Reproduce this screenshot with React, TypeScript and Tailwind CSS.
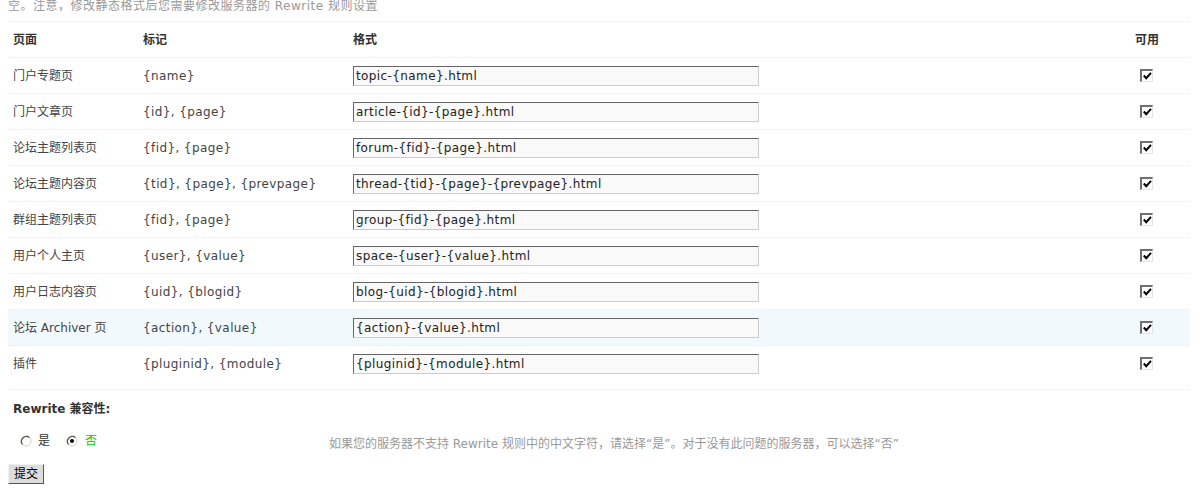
const rows = [
  { page: "门户专题页", mark: "{name}", format: "topic-{name}.html" },
  { page: "门户文章页", mark: "{id}, {page}", format: "article-{id}-{page}.html" },
  { page: "论坛主题列表页", mark: "{fid}, {page}", format: "forum-{fid}-{page}.html" },
  { page: "论坛主题内容页", mark: "{tid}, {page}, {prevpage}", format: "thread-{tid}-{page}-{prevpage}.html" },
  { page: "群组主题列表页", mark: "{fid}, {page}", format: "group-{fid}-{page}.html" },
  { page: "用户个人主页", mark: "{user}, {value}", format: "space-{user}-{value}.html" },
  { page: "用户日志内容页", mark: "{uid}, {blogid}", format: "blog-{uid}-{blogid}.html" },
  { page: "论坛 Archiver 页", mark: "{action}, {value}", format: "{action}-{value}.html", hover: true },
  { page: "插件", mark: "{pluginid}, {module}", format: "{pluginid}-{module}.html" },
];

function CheckBox() {
  return (
    <span className="ml-[5px] inline-flex h-[13px] w-[13px] items-center justify-center border-t-2 border-l-2 border-r border-b border-t-[#707070] border-l-[#707070] border-b-[#e4e4e4] border-r-[#e4e4e4] bg-white">
      <svg width="9" height="8" viewBox="0 0 9 8">
        <path d="M0.8 3.5 L3.2 6.2 L8 0.8" fill="none" stroke="#000" strokeWidth="2" />
      </svg>
    </span>
  );
}

function Radio({ checked }: { checked?: boolean }) {
  return (
    <svg width="12" height="12" viewBox="0 0 12 12">
      <circle cx="6" cy="6" r="5" fill="#fff" stroke="#d4d0c8" />
      <path d="M2.5 9.5 A5 5 0 0 1 9.5 2.5" fill="none" stroke="#555" strokeWidth="1.2" />
      {checked && <circle cx="6" cy="6" r="2" fill="#000" />}
    </svg>
  );
}

export default function App() {
  return (
    <div
      className="w-[1204px] bg-white px-2 text-[12px] text-[#444]"
      style={{ fontFamily: '"DejaVu Sans", "Noto Sans CJK SC", sans-serif' }}
    >
      <div className="h-[22px] w-[1182px] border-b border-dotted border-[#deeffb] leading-[12px] tracking-[0.5px] text-[#999]">
        空。注意，修改静态格式后您需要修改服务器的 Rewrite 规则设置
      </div>

      <div className="w-[1182px]">
        <div className="grid h-[36px] grid-cols-[130px_210px_782px_60px] items-center border-b border-dotted border-[#deeffb] font-bold text-[#333]">
          <div className="pl-[5px]">页面</div>
          <div className="pl-[5px]">标记</div>
          <div className="pl-[5px]">格式</div>
          <div className="pl-[5px]">可用</div>
        </div>

        {rows.map((r, i) => (
          <div
            key={r.page}
            className={`border-b border-dotted border-[#deeffb] ${r.hover ? "bg-[#f2f9fd]" : ""} ${i === rows.length - 1 ? "pb-[8px]" : ""}`}
          >
            <div className="grid h-[35px] grid-cols-[130px_210px_782px_60px] items-center">
              <div className="pl-[5px]">{r.page}</div>
              <div className="pl-[5px] tracking-[0.4px]">{r.mark}</div>
              <div className="pl-[5px]">
                <div className="flex h-[20px] w-[406px] items-center border border-t-[#666] border-l-[#666] border-b-[#ccc] border-r-[#ccc] bg-[#f9f9f9] pl-[2px] tracking-[0.4px] text-[#222]">
                  {r.format}
                </div>
              </div>
              <div className="flex pl-[5px]">
                <CheckBox />
              </div>
            </div>
          </div>
        ))}
      </div>

      <div className="flex h-[38px] items-center pl-[5px] font-bold text-[#333]">Rewrite 兼容性:</div>

      <div className="flex h-[26px] w-[1182px] items-center">
        <div className="flex w-[321px] items-center pl-[12px]">
          <Radio />
          <span className="ml-[6px] text-[#333]">是</span>
          <span className="ml-[16px]">
            <Radio checked />
          </span>
          <span className="ml-[7px] text-[#00cc00]">否</span>
        </div>
        <div className="mt-[6px] text-[#999]">
          如果您的服务器不支持 Rewrite 规则中的中文字符，请选择“是”。对于没有此问题的服务器，可以选择“否”
        </div>
      </div>

      <div className="pt-[10px]">
        <button className="h-[20px] w-[36px] border border-t-[#f0f0f0] border-l-[#f0f0f0] border-b-[#555] border-r-[#555] bg-[#dddddd] text-[12px] leading-[18px] text-black">
          提交
        </button>
      </div>
    </div>
  );
}
